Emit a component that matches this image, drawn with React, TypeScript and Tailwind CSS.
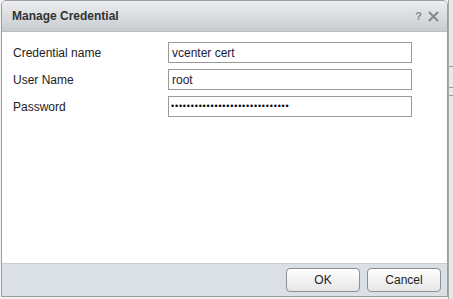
export default function App() {
  return (
    <div className="relative h-[299px] w-[453px] overflow-hidden bg-[#f2f2f2] font-['Liberation_Sans',Arial,sans-serif]">
      <div className="absolute right-0 top-0 h-full w-[5px] border-l border-[#a9a9a9] bg-[#e8e8e8]">
        <div className="mt-[66px] h-px bg-[#9a9a9a]" />
        <div className="mt-[20px] h-px bg-[#9a9a9a]" />
        <div className="mt-[7px] h-px bg-[#9a9a9a]" />
      </div>

      <div className="ml-px flex h-[297px] w-[447px] flex-col overflow-hidden rounded-t-[5px] border border-[#9d9d9d] bg-white">
        <div className="flex h-[31px] shrink-0 items-center justify-between border-b border-[#b9bdc1] bg-gradient-to-b from-[#eceef0] to-[#c8ccd0] pl-[10px] pr-[8px]">
          <span className="text-[12px] font-bold text-[#333333]">Manage Credential</span>
          <div className="flex items-center gap-[6px] text-[#8a8a8a]">
            <span className="text-[11px] font-bold">?</span>
            <svg width="11" height="11" viewBox="0 0 11 11">
              <path d="M1 1 L10 10 M10 1 L1 10" stroke="#888" strokeWidth="2" />
            </svg>
          </div>
        </div>

        <div className="flex flex-1 flex-col gap-[6px] px-[11px] pt-[10px] text-[12px] text-[#222]">
          {[
            ["Credential name", "vcenter cert"],
            ["User Name", "root"],
          ].map(([label, value]) => (
            <div key={label} className="flex items-center">
              <span className="w-[155px]">{label}</span>
              <div className="flex h-[21px] w-[244px] items-center border border-[#999] px-[3px] text-[#1a1a40]">
                {value}
              </div>
            </div>
          ))}
          <div className="flex items-center">
            <span className="w-[155px]">Password</span>
            <div className="flex h-[21px] w-[244px] items-center border border-[#999] px-[2px] text-[9px] leading-none tracking-[0.8px] text-black">
              {"•".repeat(30)}
            </div>
          </div>
        </div>

        <div className="flex h-[33px] shrink-0 items-center justify-end gap-[7px] border-t border-[#c9ced3] bg-[#dae0e6] pr-[6px]">
          <button className="h-[24px] w-[74px] rounded-[4px] border border-[#8f8f8f] bg-gradient-to-b from-white to-[#e6e6e6] text-[12px] text-[#222]">
            OK
          </button>
          <button className="h-[24px] w-[74px] rounded-[4px] border border-[#8f8f8f] bg-gradient-to-b from-white to-[#e6e6e6] text-[12px] text-[#222]">
            Cancel
          </button>
        </div>
      </div>
    </div>
  );
}
